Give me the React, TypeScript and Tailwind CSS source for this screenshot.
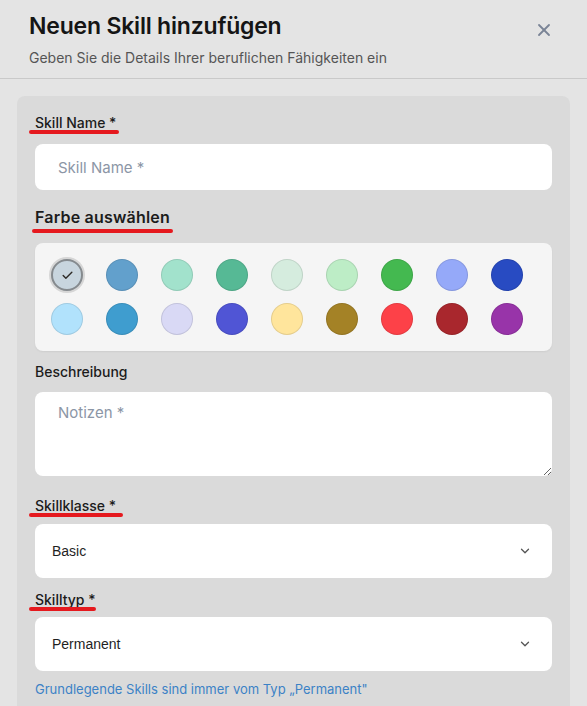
import { Check, ChevronDown, X } from "lucide-react";

const swatches = [
  "#c8d5de",
  "#62a0cc",
  "#a2e2cc",
  "#56b995",
  "#d5ecde",
  "#bdedc6",
  "#44b950",
  "#95a9f9",
  "#284bc2",
  "#b1e2fc",
  "#3f9dcf",
  "#d9d9f5",
  "#5055d5",
  "#ffe59c",
  "#a48226",
  "#fd4148",
  "#a9272d",
  "#9834a9",
];

function Marked({ children, className, bar }: { children: React.ReactNode; className: string; bar: string }) {
  return (
    <div className="relative">
      <span className={className}>{children}</span>
      <span className={`absolute h-[4px] rounded-full bg-[#e5191e] ${bar}`} />
    </div>
  );
}

function SelectBox({ value }: { value: string }) {
  return (
    <div className="flex h-[54px] items-center justify-between rounded-lg bg-white pl-[17px] pr-[20px] font-['Liberation_Sans',Arial,sans-serif] text-[14px] text-[#1f1f1f]">
      <span>{value}</span>
      <ChevronDown className="size-[14px] text-[#555]" strokeWidth={2.2} />
    </div>
  );
}

export default function App() {
  return (
    <div className="min-h-screen bg-[#e4e4e4] font-['Inter',sans-serif]">
      <header className="flex items-start justify-between border-b border-[#c9c9c9] pl-[29px] pr-[33px] pt-[11px] pb-[10px]">
        <div>
          <h1 className="text-[23px] font-semibold leading-[30px] tracking-[-0.2px] text-[#151515]">
            Neuen Skill hinzufügen
          </h1>
          <p className="mt-[7px] text-[14px] leading-[20px] text-[#555]">
            Geben Sie die Details Ihrer beruflichen Fähigkeiten ein
          </p>
        </div>
        <X className="mt-[9px] size-[20px] text-[#7a8496]" strokeWidth={2.2} />
      </header>

      <main className="mx-[17px] mt-[17px] h-[620px] rounded-t-lg bg-[#dadada] px-[18px] pt-[14px]">
        <Marked className="text-[14px] font-medium leading-[20px] text-[#1c1c1c]" bar="left-[-6px] top-[20px] w-[90px]">
          Skill Name *
        </Marked>
        <input
          className="mt-[10px] block h-[46px] w-full rounded-lg bg-white px-[23px] text-[15px] outline-none placeholder:text-[#8c96a6]"
          placeholder="Skill Name *"
        />

        <div className="mt-[15px]">
          <Marked className="text-[16px] font-semibold leading-[22px] tracking-[0.2px] text-[#1c1c1c]" bar="left-[-3px] top-[24px] w-[141px]">
            Farbe auswählen
          </Marked>
        </div>

        <div className="mt-[14px] flex flex-col gap-[12px] rounded-lg bg-[#f5f5f5] p-[16px] shadow-[0_1px_2px_rgba(0,0,0,0.06)]">
          {[swatches.slice(0, 9), swatches.slice(9)].map((row, r) => (
            <div key={r} className="flex gap-[23px]">
              {row.map((c) =>
                c === swatches[0] ? (
                  <div
                    key={c}
                    className="flex size-[32px] items-center justify-center rounded-full border-2 border-[#858a8e] ring-2 ring-[#d6d6d6]"
                    style={{ backgroundColor: c }}
                  >
                    <Check className="size-[13px] text-[#2e2a26]" strokeWidth={2.6} />
                  </div>
                ) : (
                  <div
                    key={c}
                    className="size-[32px] rounded-full border-[1.5px] border-black/10"
                    style={{ backgroundColor: c }}
                  />
                ),
              )}
            </div>
          ))}
        </div>

        <p className="mt-[11px] text-[14px] font-medium leading-[20px] text-[#1c1c1c]">Beschreibung</p>
        <textarea
          className="mt-[10px] block h-[84px] w-full rounded-lg bg-white px-[23px] py-[10px] text-[15px] outline-none placeholder:text-[#8c96a6]"
          placeholder="Notizen *"
        />

        <div className="mt-[17px]">
          <Marked className="text-[14px] font-medium leading-[20px] text-[#1c1c1c]" bar="left-[-6px] top-[20px] w-[94px]">
            Skillklasse *
          </Marked>
        </div>
        <div className="mt-[7px]">
          <SelectBox value="Basic" />
        </div>

        <div className="mt-[9px]">
          <Marked className="text-[14px] font-medium leading-[20px] text-[#1c1c1c]" bar="left-[-6px] top-[20px] w-[67px]">
            Skilltyp *
          </Marked>
        </div>
        <div className="mt-[6px]">
          <SelectBox value="Permanent" />
        </div>

        <p className="mt-[9px] text-[13px] leading-[18px] text-[#3c82c6]">
          Grundlegende Skills sind immer vom Typ „Permanent"
        </p>
      </main>
    </div>
  );
}
